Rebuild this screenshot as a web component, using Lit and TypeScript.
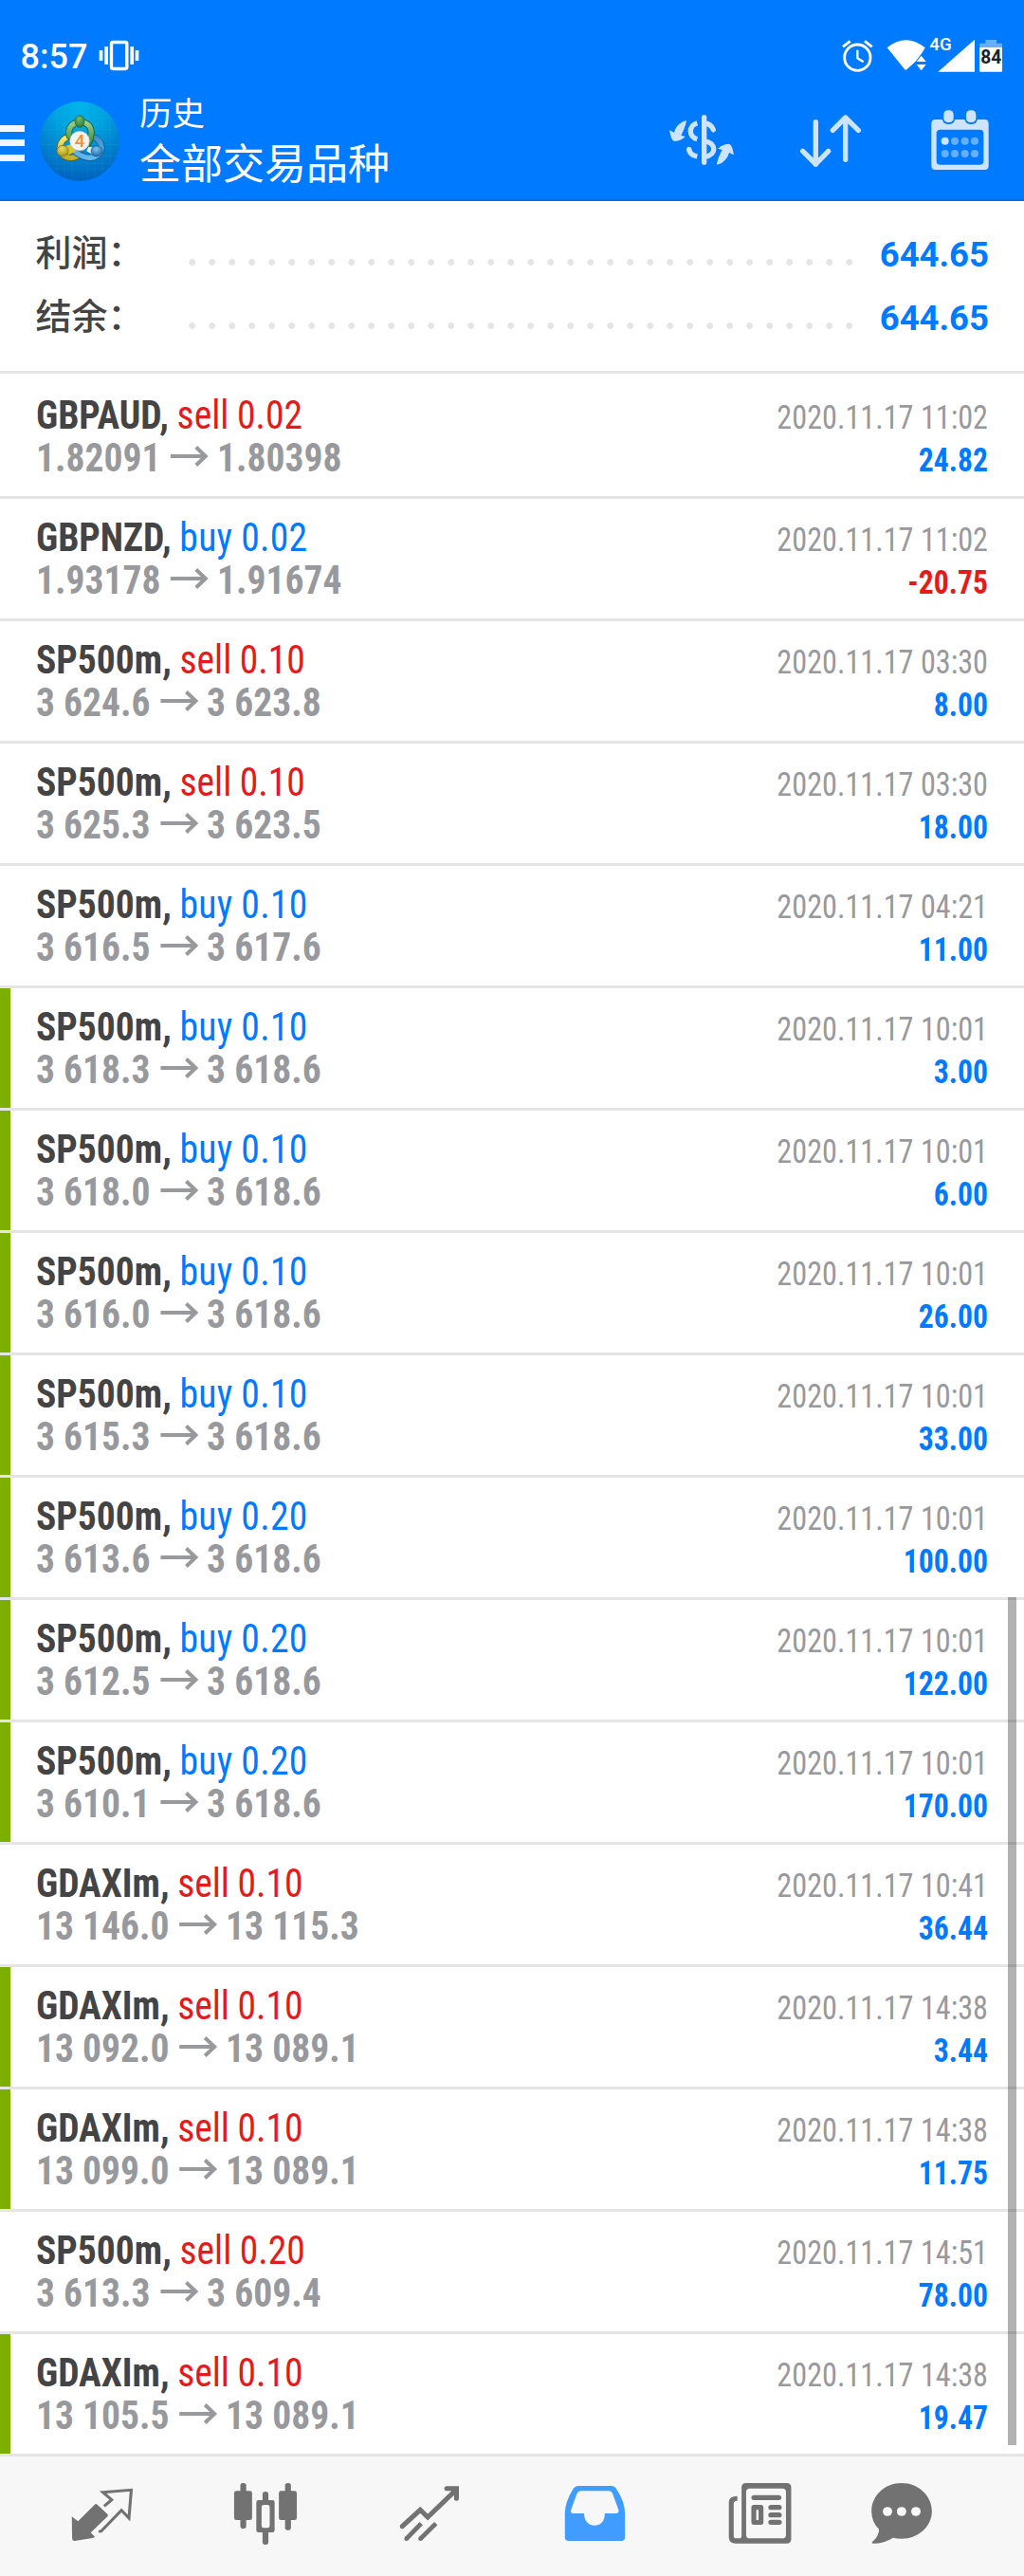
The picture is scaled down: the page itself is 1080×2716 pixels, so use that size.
import { LitElement, html, css, svg } from "lit";
import { customElement, property } from "lit/decorators.js";
import { classMap } from "lit/directives/class-map.js";

type Deal = [symbol: string, side: "buy" | "sell", lots: string, open: string, close: string, time: string, profit: string, marked?: boolean];

const DEALS: Deal[] = [
  ["GBPAUD", "sell", "0.02", "1.82091", "1.80398", "2020.11.17 11:02", "24.82"],
  ["GBPNZD", "buy", "0.02", "1.93178", "1.91674", "2020.11.17 11:02", "-20.75"],
  ["SP500m", "sell", "0.10", "3 624.6", "3 623.8", "2020.11.17 03:30", "8.00"],
  ["SP500m", "sell", "0.10", "3 625.3", "3 623.5", "2020.11.17 03:30", "18.00"],
  ["SP500m", "buy", "0.10", "3 616.5", "3 617.6", "2020.11.17 04:21", "11.00"],
  ["SP500m", "buy", "0.10", "3 618.3", "3 618.6", "2020.11.17 10:01", "3.00", true],
  ["SP500m", "buy", "0.10", "3 618.0", "3 618.6", "2020.11.17 10:01", "6.00", true],
  ["SP500m", "buy", "0.10", "3 616.0", "3 618.6", "2020.11.17 10:01", "26.00", true],
  ["SP500m", "buy", "0.10", "3 615.3", "3 618.6", "2020.11.17 10:01", "33.00", true],
  ["SP500m", "buy", "0.20", "3 613.6", "3 618.6", "2020.11.17 10:01", "100.00", true],
  ["SP500m", "buy", "0.20", "3 612.5", "3 618.6", "2020.11.17 10:01", "122.00", true],
  ["SP500m", "buy", "0.20", "3 610.1", "3 618.6", "2020.11.17 10:01", "170.00", true],
  ["GDAXIm", "sell", "0.10", "13 146.0", "13 115.3", "2020.11.17 10:41", "36.44"],
  ["GDAXIm", "sell", "0.10", "13 092.0", "13 089.1", "2020.11.17 14:38", "3.44", true],
  ["GDAXIm", "sell", "0.10", "13 099.0", "13 089.1", "2020.11.17 14:38", "11.75", true],
  ["SP500m", "sell", "0.20", "3 613.3", "3 609.4", "2020.11.17 14:51", "78.00"],
  ["GDAXIm", "sell", "0.10", "13 105.5", "13 089.1", "2020.11.17 14:38", "19.47", true],
];

@customElement("status-bar")
class StatusBar extends LitElement {
  static styles = css`
    :host { display: flex; box-sizing: border-box; height: 88px; padding: 38px 22px 0 21.500px; color: #fff; }
    .time { font: 500 36px/45px Roboto, sans-serif; }
    .vibrate { margin-left: 11.500px; }
    .alarm { margin-left: auto; margin-right: 14px; }
    .wifi { margin-right: 2px; }
    .signal { margin-right: 3px; }
    svg { display: block; height: 39px; flex: none; overflow: visible; }
    text { font-family: Roboto, sans-serif; }
  `;
  render() {
    return html`
      <span class="time">8:57</span>
      <svg class="vibrate" width="44" viewBox="312 54 132 117" fill="#fff">
        <rect x="352.500" y="73.500" width="49" height="84" rx="5" fill="none" stroke="#fff" stroke-width="10" />
        <rect x="314" y="99" width="11" height="33" /><rect x="331" y="87" width="11" height="57" />
        <rect x="412" y="87" width="11" height="57" /><rect x="428" y="99" width="11" height="33" />
      </svg>
      <svg class="alarm" width="33" viewBox="684 54 99 117" fill="none" stroke="#fff" stroke-width="8.500">
        <circle cx="733" cy="122" r="41" />
        <path d="M733 98V124L752 136" stroke-width="7" />
        <path d="M687 88L710 70M779 88L756 70" stroke-width="9" />
      </svg>
      <svg class="wifi" width="42" viewBox="825 54 126 117" fill="#fff">
        <path d="M827 91Q886 43 947 91L935 111L917 134L890 159Q886 163 882 159Z" />
        <path d="M935 111L954 137V164H917V138Z" fill="#007aff" />
        <path d="M935 116L950 135H920ZM920 144H950L935 163Z" />
      </svg>
      <svg class="signal" width="50" viewBox="957 54 150 117" fill="#fff">
        <path d="M1104 65V167H988Z" />
        <text x="961" y="100" font-size="55" textLength="70" lengthAdjust="spacingAndGlyphs" font-weight="500">4G</text>
      </svg>
      <svg width="26" viewBox="1116 54 78 117">
        <path d="M1119 90V80Q1119 77 1122 77H1138V66H1173V77H1188Q1191 77 1191 80V90Z" fill="#66afff" />
        <path d="M1119 90H1191V164Q1191 167 1188 167H1122Q1119 167 1119 164Z" fill="#fff" />
        <text x="1123" y="141" font-size="58" textLength="66" lengthAdjust="spacingAndGlyphs" font-weight="700" fill="#222">84</text>
      </svg>
    `;
  }
}

@customElement("app-emblem")
class AppEmblem extends LitElement {
  static styles = css`
    :host { display: block; flex: none; width: 84px; height: 84px; }
    svg { display: block; }
  `;
  render() {
    return html`<svg width="84" height="84" viewBox="126 261 252 252">
      <defs>
        <radialGradient id="sky" cx=".5" cy=".05" r=".95"><stop offset="0" stop-color="#00b4ec" /><stop offset=".35" stop-color="#00a2df" /><stop offset="1" stop-color="#0062bd" /></radialGradient>
        <linearGradient id="green" x1="0" y1="0" x2="0" y2="1"><stop offset="0" stop-color="#9bcf8d" /><stop offset="1" stop-color="#2f8a42" /></linearGradient>
        <linearGradient id="yellow" x1="0" y1="0" x2="0" y2="1"><stop offset="0" stop-color="#f0e878" /><stop offset="1" stop-color="#c2b128" /></linearGradient>
        <linearGradient id="blue" x1="0" y1="0" x2="0" y2="1"><stop offset="0" stop-color="#3b8fcb" /><stop offset="1" stop-color="#64b8ee" /></linearGradient>
        <radialGradient id="greenKnob" cx=".45" cy=".3" r=".7"><stop offset="0" stop-color="#79b96c" /><stop offset="1" stop-color="#2a7c38" /></radialGradient>
        <radialGradient id="yellowKnob" cx=".45" cy=".3" r=".7"><stop offset="0" stop-color="#e6dc6a" /><stop offset="1" stop-color="#a99718" /></radialGradient>
        <radialGradient id="blueKnob" cx=".45" cy=".3" r=".7"><stop offset="0" stop-color="#7cc4ee" /><stop offset="1" stop-color="#1a6cae" /></radialGradient>
      </defs>
      <circle cx="252" cy="387" r="126" fill="url(#sky)" />
      <path d="M156 311V463M180 285V490M204 271V504M228 264V510M276 264V510M300 271V504M324 285V490M348 311V463M150 313H354M133 349H371M127 397H377M133 433H371M145 457H359M160 476H344" stroke="#4cc3f0" stroke-opacity=".16" stroke-width="2" fill="none" />
      <g fill="none" stroke-linecap="round">
        <path d="M219 372C182 380 177 436 222 439Q240 440 252 428" stroke="#63631f" stroke-width="21" />
        <path d="M219 372C182 380 177 436 222 439Q240 440 252 428" stroke="url(#yellow)" stroke-width="16" />
        <path d="M292 372C330 384 330 428 298 437Q270 444 240 422" stroke="#115a93" stroke-width="21" />
        <path d="M292 372C330 384 330 428 298 437Q270 444 240 422" stroke="url(#blue)" stroke-width="16" />
        <path d="M219 370C207 314 297 310 288 366Q287 384 275 398" stroke="#1b5630" stroke-width="21" />
        <path d="M219 370C207 314 297 310 288 366Q287 384 275 398" stroke="url(#green)" stroke-width="16" />
      </g>
      <path d="M206 402L228 395L240 419L216 430Z" fill="#d5c52e" />
      <path d="M280 404L300 407L292 428L274 418Z" fill="#e4f3ff" />
      <ellipse cx="252" cy="324" rx="15" ry="19" fill="url(#greenKnob)" stroke="#1d6130" stroke-width="2" />
      <ellipse cx="198" cy="417" rx="18" ry="17" fill="url(#yellowKnob)" stroke="#71691e" stroke-width="2" />
      <ellipse cx="306" cy="418" rx="18" ry="17" fill="url(#blueKnob)" stroke="#125384" stroke-width="2" />
      <circle cx="252" cy="386" r="31" fill="#f3f3f5" stroke="#b5bdc2" stroke-width="2" />
      <text x="252" y="405" text-anchor="middle" font-family="Roboto, sans-serif" font-weight="500" font-size="56" fill="#f98f2e">4</text>
    </svg>`;
  }
}

@customElement("tool-bar")
class ToolBar extends LitElement {
  static styles = css`
    :host { display: flex; align-items: center; box-sizing: border-box; height: 124px; padding-right: 32px; border-bottom: 2px solid #006de3; }
    .burger { flex: none; margin-right: 16px; }
    .titles { flex: 1; align-self: flex-start; padding: 4px 0 0 21px; color: #fff; font-family: "Noto Sans CJK SC", sans-serif; }
    .section { font-size: 34.500px; line-height: 50px; }
    .filter { font-size: 44px; line-height: 57px; }
    .actions { display: flex; gap: 64px; }
    svg { display: block; }
  `;
  render() {
    return html`
      <svg class="burger" width="26" height="42" fill="#f0f7ff"><path d="M0 4H26V11H0ZM0 19H26V26H0ZM0 35H26V42H0Z" /></svg>
      <app-emblem></app-emblem>
      <div class="titles">
        <div class="section">历史</div>
        <div class="filter">全部交易品种</div>
      </div>
      <div class="actions">
        <svg width="72" height="72" viewBox="132 279 216 216" fill="#cce4ff">
          <path id="swing" d="M192 321C190 337 181 357 175 368L188 372Q176 385 154 387Q144 387 138 352L153 359C158 341 172 325 192 321Z" />
          <use href="#swing" transform="rotate(180 240 391)" />
          <rect x="240" y="303" width="16" height="159" rx="8" />
          <g fill="none" stroke="#cce4ff" stroke-width="16">
            <path d="M226 329C198 338 198 371 226 380" />
            <path d="M250 330Q270 332 277 350" stroke-linecap="round" />
            <path d="M250 387C286 391 289 430 250 436" />
            <path d="M226 435Q202 430 200 412" />
            <circle cx="200" cy="412" r="8" fill="#cce4ff" stroke="none" />
          </g>
        </svg>
        <svg width="72" height="72" viewBox="540 279 216 216" fill="none" stroke="#cce4ff" stroke-width="16" stroke-linecap="round" stroke-linejoin="round">
          <path d="M601 326V460M560 418L601 459L641 418M695 445V312M655 352L695 312L736 352" />
        </svg>
        <svg width="72" height="72" viewBox="948 279 216 216" fill="#cce4ff">
          <path fill-rule="evenodd" d="M980 318H1135Q1148 318 1148 331V464Q1148 477 1135 477H980Q967 477 967 464V331Q967 318 980 318ZM995 350Q983 350 983 362V449Q983 461 995 461H1120Q1132 461 1132 449V362Q1132 350 1120 350Z" />
          <rect x="1001" y="283" width="41" height="50" rx="18" fill="#007aff" /><rect x="1072" y="283" width="41" height="50" rx="18" fill="#007aff" />
          <rect x="1006" y="289" width="31" height="38" rx="13" /><rect x="1077" y="289" width="31" height="38" rx="13" />
          <circle cx="1010" cy="386" r="12" />
          <g fill="#66afff">
            <circle cx="1041" cy="386" r="12" /><circle cx="1073" cy="386" r="12" /><circle cx="1104" cy="386" r="12" />
            <circle cx="1010" cy="426" r="12" /><circle cx="1041" cy="426" r="12" /><circle cx="1073" cy="426" r="12" /><circle cx="1104" cy="426" r="12" />
          </g>
        </svg>
      </div>
    `;
  }
}

@customElement("account-summary")
class AccountSummary extends LitElement {
  static styles = css`
    :host { display: block; box-sizing: border-box; height: 182px; padding: 22px 37px 0 37.500px; border-bottom: 3px solid #e5e5e5; background: #fff; }
    .line { display: flex; align-items: center; height: 67px; }
    .label { width: 154.500px; margin-bottom: 7px; color: #444; font: 500 38px/60px "Noto Sans CJK SC", sans-serif; }
    .dots { width: 714px; height: 7px; margin-top: 17px; background: radial-gradient(circle at 10.700px 3.500px, #e5e5e5 3.100px, transparent 3.700px) 0 0 / 21px 7px repeat-x; }
    .amount { margin-left: auto; padding-top: 2px; color: #007aff; font: 700 36.500px/65px Roboto, sans-serif; }
  `;
  render() {
    return ["利润：", "结余："].map(
      (label) => html`<div class="line"><span class="label">${label}</span><span class="dots"></span><span class="amount">644.65</span></div>`,
    );
  }
}

@customElement("deal-row")
class DealRow extends LitElement {
  static styles = css`
    :host { display: block; font-family: "Roboto Condensed", Roboto, sans-serif; }
    .row { display: flex; justify-content: space-between; box-sizing: border-box; height: 129px; padding: 18px 38px 0 0; border-bottom: 3px solid #e5e5e5; background: #fff; white-space: nowrap; }
    .stripe { width: 10.500px; height: 126px; margin-top: -18px; background: #7daf00; }
    .stripe.plain { background: none; }
    .deal { flex: 1; margin-left: 27px; transform: scaleX(0.942); transform-origin: left; }
    .name, .prices { height: 45px; font-size: 42px; line-height: 45px; }
    .name { word-spacing: -0.500px; }
    .symbol { font-weight: 700; color: #444; }
    .buy { color: #007aff; letter-spacing: 0.300px; }
    .sell { color: #e31b1b; }
    .prices { display: flex; font-weight: 700; color: #98999d; }
    .arrow { margin: 10px 9px 0 10.700px; }
    .result { text-align: right; line-height: 45px; padding-top: 2.500px; }
    .time { font-size: 35px; height: 45px; color: #98999d; transform: scaleX(0.92); transform-origin: right; }
    .profit { font-size: 34.500px; font-weight: 700; color: #007aff; transform: scaleX(0.918); transform-origin: right; }
    .profit.loss { color: #e31b1b; }
  `;
  @property({ attribute: false }) deal!: Deal;
  render() {
    const [symbol, side, lots, open, close, time, profit, marked] = this.deal;
    return html`<div class="row">
      <div class=${classMap({ stripe: true, plain: !marked })}></div>
      <div class="deal">
        <div class="name"><span class="symbol">${symbol},</span> <span class=${side}>${side} ${lots}</span></div>
        <div class="prices">
          <span>${open}</span>
          <svg class="arrow" width="43.500" height="22" viewBox="0 0 41 22" preserveAspectRatio="none" fill="none" stroke="#98999d" stroke-width="4"><path d="M0.500 11H38M27.500 1.500L37.500 11L27.500 20.500" /></svg>
          <span>${close}</span>
        </div>
      </div>
      <div class="result">
        <div class="time">${time}</div>
        <div class=${classMap({ profit: true, loss: profit.startsWith("-") })}>${profit}</div>
      </div>
    </div>`;
  }
}

/* Icon artwork is drawn on a 209.07 x 216 grid that is stretched onto a 72px square. */
const NAV_ICONS = [
  svg`<svg viewBox="206.200 111 209.070 216" preserveAspectRatio="none">
    <path d="M220 220L239 235L290 182Q294 178 298 182L329 212Q333 216 329 220L278 271L291 284Q288 287 283 288L229 297Q221 297 221 289Z" />
    <path d="M319 187L342 167L315 143L402 136L395 225L372 200L310 266Q308 268 302 266" fill="none" stroke="#727272" stroke-width="9" /></svg>`,
  svg`<svg viewBox="711.400 111 209.070 216" preserveAspectRatio="none">
    <rect x="717" y="139" width="55" height="92" rx="7" /><rect x="854" y="139" width="55" height="92" rx="7" />
    <rect x="736" y="114" width="18" height="144" rx="8" /><rect x="873" y="114" width="18" height="149" rx="8" />
    <path d="M804 168V150Q804 141 813 141Q822 141 822 150V168H834Q841 168 841 175V263Q841 270 834 270H822V300Q822 309 813 309Q804 309 804 300V270H792Q785 270 785 263V175Q785 168 792 168ZM808 183Q801 183 801 190V249Q801 256 808 256H819Q826 256 826 249V190Q826 183 819 183Z" fill-rule="evenodd" /></svg>`,
  svg`<svg viewBox="1216.700 111 209.070 216" preserveAspectRatio="none">
    <path d="M1232 251L1287 199L1310 222L1398 134M1368 131H1398V163" fill="none" stroke="#727272" stroke-width="15" stroke-linecap="round" />
    <path d="M1290 242L1245 290M1335 242L1288 290" fill="none" stroke="#727272" stroke-width="14" />
    <circle cx="1245" cy="290" r="7" /><circle cx="1288" cy="290" r="7" /></svg>`,
  svg`<svg viewBox="153.900 111 209.070 216" preserveAspectRatio="none" fill="#419cff">
    <path fill-rule="evenodd" d="M202 123H306Q314 123 319 131Q346 174 346 210V285Q346 297 334 297H174Q162 297 162 285V210Q162 174 188 131Q194 123 202 123ZM211 139Q202 139 199 147L181 198Q177 210 189 210H221C219 261 287 261 284 210H318Q329 210 326 198L308 147Q305 139 295 139Z" /></svg>`,
  svg`<svg viewBox="659.100 111 209.070 216" preserveAspectRatio="none">
    <path fill-rule="evenodd" d="M717 114H841Q855 114 855 128V290Q855 305 841 305H685Q664 305 664 284V176Q664 155 690 155V170Q679 170 679 179V281Q679 289 687 289H695Q703 289 703 281V128Q703 114 717 114ZM728 131Q717 131 717 142V278Q717 289 728 289H828Q839 289 839 278V142Q839 131 828 131Z" />
    <rect x="733" y="152" width="92" height="16" rx="8" />
    <path fill-rule="evenodd" d="M741 183H762Q770 183 770 191V238Q770 246 762 246H741Q733 246 733 238V191Q733 183 741 183ZM748 199V231H755V199Z" />
    <rect x="785" y="183" width="41" height="16" rx="8" /><rect x="785" y="207" width="41" height="16" rx="8" /><rect x="785" y="230" width="41" height="16" rx="8" /></svg>`,
  svg`<svg viewBox="1088.900 111 209.070 216" preserveAspectRatio="none">
    <path d="M1193 114C1244 114 1286 154 1286 203C1286 251 1244 290 1193 290Q1180 290 1167 287Q1140 305 1107 305Q1099 304 1104 299Q1124 282 1124 260Q1101 237 1101 203C1101 154 1142 114 1193 114Z" />
    <g fill="#f7f7f7"><circle cx="1150" cy="204" r="14.500" /><circle cx="1193" cy="204" r="14.500" /><circle cx="1237" cy="204" r="14.500" /></g></svg>`,
];

@customElement("bottom-nav")
class BottomNav extends LitElement {
  static styles = css`
    :host { display: flex; align-items: center; gap: 102px; box-sizing: border-box; height: 126px; padding-left: 71px; background: #f7f7f7; fill: #727272; }
    .item { width: 72px; height: 72px; }
    .item:last-child { margin-left: -26px; }
    .item svg { display: block; width: 72px; height: 72px; }
  `;
  render() {
    return NAV_ICONS.map((icon) => html`<div class="item">${icon}</div>`);
  }
}

@customElement("app-root")
class AppRoot extends LitElement {
  static styles = css`
    :host { display: block; width: 1080px; height: 2716px; overflow: hidden; background: #fff; }
    .header { height: 212px; background: #007aff; }
    .history { position: relative; padding-top: 3px; }
    .scrollbar { position: absolute; right: 8.500px; bottom: 12px; width: 8.500px; height: 894px; background: rgba(0, 0, 0, 0.3); }
  `;
  render() {
    return html`
      <div class="header"><status-bar></status-bar><tool-bar></tool-bar></div>
      <account-summary></account-summary>
      <div class="history">
        ${DEALS.map((deal) => html`<deal-row .deal=${deal}></deal-row>`)}
        <div class="scrollbar"></div>
      </div>
      <bottom-nav></bottom-nav>
    `;
  }
}
